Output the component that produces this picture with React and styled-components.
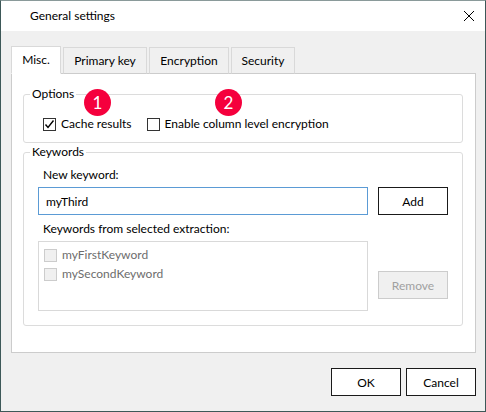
import React from "react";
import styled, { createGlobalStyle } from "styled-components";

const GlobalStyle = createGlobalStyle`
  html, body {
    margin: 0;
    padding: 0;
    background: #ffffff;
  }
  * {
    box-sizing: border-box;
  }
  body {
    font-family: "Segoe UI", Lato, "Noto Sans", sans-serif;
    font-size: 12px;
    color: #000000;
  }
`;

const Window = styled.div`
  width: 486px;
  height: 412px;
  display: flex;
  flex-direction: column;
  border: 1px solid #3d5858;
  border-top-color: #8a9a9a;
  background: #f0f0f0;
`;

const TitleBar = styled.div`
  height: 30px;
  flex-shrink: 0;
  display: flex;
  align-items: center;
  justify-content: space-between;
  background: #ffffff;
  padding: 0 8px 0 29px;
`;

const Title = styled.span`
  font-size: 12px;
  line-height: 16px;
`;

const CloseBtn = styled.button`
  width: 16px;
  height: 16px;
  display: flex;
  align-items: center;
  justify-content: center;
  border: none;
  padding: 0;
  background: transparent;
`;

const Body = styled.div`
  flex: 1;
  display: flex;
  flex-direction: column;
  padding: 15px 9px 0 10px;
`;

const TabStrip = styled.div`
  display: flex;
  align-items: flex-end;
  gap: 2px;
  height: 28px;
  margin-bottom: -1px;
  position: relative;
  z-index: 1;
`;

const Tab = styled.div`
  width: ${(p) => p.$w}px;
  height: ${(p) => (p.$active ? 28 : 27)}px;
  display: flex;
  align-items: center;
  justify-content: center;
  padding-bottom: ${(p) => (p.$active ? 1 : 0)}px;
  border: 1px solid #d9d9d9;
  border-bottom-color: ${(p) => (p.$active ? "#ffffff" : "#cccccc")};
  background: ${(p) => (p.$active ? "#ffffff" : "#f0f0f0")};
`;

const Panel = styled.div`
  height: 280px;
  background: #ffffff;
  border: 1px solid #cccccc;
  padding: 12px 12px 0 11px;
  display: flex;
  flex-direction: column;
  gap: 1px;
`;

const Group = styled.fieldset`
  position: relative;
  margin: 0;
  padding: 0;
  border: 1px solid #dcdcdc;
  border-radius: 3px;
  min-width: 0;
`;

const Legend = styled.legend`
  margin-left: 6px;
  padding: 0 2px;
  line-height: 16px;
`;

const OptionsRow = styled.div`
  display: flex;
  align-items: center;
  gap: 15px;
  padding: 14px 0 10px 19px;
`;

const CheckLabel = styled.label`
  display: flex;
  align-items: center;
  gap: 5px;
  line-height: 16px;
  color: ${(p) => (p.$disabled ? "#6d6d6d" : "#000000")};
`;

const Box = styled.span`
  width: 13px;
  height: 13px;
  display: flex;
  align-items: center;
  justify-content: center;
  border: 1px solid ${(p) => (p.$disabled ? "#cccccc" : "#333333")};
  background: ${(p) => (p.$disabled ? "#f0f0f0" : "#ffffff")};
`;

const Badge = styled.span`
  position: absolute;
  top: ${(p) => p.$top}px;
  left: ${(p) => p.$left}px;
  width: 27px;
  height: 27px;
  border-radius: 50%;
  background: #f5003d;
  color: #ffffff;
  font-size: 17px;
  display: flex;
  align-items: center;
  justify-content: center;
`;

const KeywordsGrid = styled.div`
  display: grid;
  grid-template-columns: 330px 70px;
  column-gap: 10px;
  padding: 7px 14px 14px 14px;
`;

const FieldLabel = styled.div`
  grid-column: 1 / 3;
  line-height: 16px;
  padding-left: 5px;
  margin-bottom: 4px;
  margin-top: ${(p) => p.$top || 0}px;
`;

const TextInput = styled.input`
  height: 28px;
  border: 1px solid #5b9bd5;
  padding: 0 7px;
  font: inherit;
  font-size: 12px;
  color: #000000;
  outline: none;
`;

const Button = styled.button`
  width: 70px;
  height: 28px;
  font: inherit;
  font-size: 12px;
  border: 1px solid ${(p) => (p.disabled ? "#cccccc" : "#1a1a1a")};
  background: ${(p) => (p.disabled ? "#f0f0f0" : "#ffffff")};
  color: ${(p) => (p.disabled ? "#a0a0a0" : "#000000")};
  align-self: start;
  margin-top: ${(p) => p.$top || 0}px;
  padding: 0;
`;

const ListBox = styled.div`
  height: 70px;
  border: 1px solid #d9d9d9;
  padding: 5px 0 0 5px;
  display: flex;
  flex-direction: column;
  gap: 3px;
`;

const Footer = styled.div`
  display: flex;
  justify-content: flex-end;
  gap: 5px;
  margin-top: 15px;
`;

function CheckMark() {
  return (
    <svg width="11" height="11" viewBox="0 0 11 11">
      <path d="M1.5 5.5 L4 8.5 L9.5 1.5" fill="none" stroke="#000" strokeWidth="1.4" />
    </svg>
  );
}

function CheckBox({ checked, disabled, children }) {
  return (
    <CheckLabel $disabled={disabled}>
      <Box $disabled={disabled}>{checked && <CheckMark />}</Box>
      {children}
    </CheckLabel>
  );
}

const tabs = [
  { name: "Misc.", w: 50 },
  { name: "Primary key", w: 84 },
  { name: "Encryption", w: 80 },
  { name: "Security", w: 64 },
];

export default function App() {
  return (
    <>
      <GlobalStyle />
      <Window>
        <TitleBar>
          <Title>General settings</Title>
          <CloseBtn>
            <svg width="12" height="12" viewBox="0 0 12 12">
              <path d="M1 1 L11 11 M11 1 L1 11" stroke="#000" strokeWidth="1" />
            </svg>
          </CloseBtn>
        </TitleBar>

        <Body>
          <TabStrip>
            {tabs.map((t, i) => (
              <Tab key={t.name} $w={t.w} $active={i === 0}>
                {t.name}
              </Tab>
            ))}
          </TabStrip>

          <Panel>
            <Group>
              <Legend>Options</Legend>
              <OptionsRow>
                <CheckBox checked>Cache results</CheckBox>
                <CheckBox>Enable column level encryption</CheckBox>
              </OptionsRow>
              <Badge $left={60} $top={-13}>1</Badge>
              <Badge $left={191} $top={-13}>2</Badge>
            </Group>

            <Group>
              <Legend>Keywords</Legend>
              <KeywordsGrid>
                <FieldLabel>New keyword:</FieldLabel>
                <TextInput defaultValue="myThird" />
                <Button>Add</Button>
                <FieldLabel $top={6}>Keywords from selected extraction:</FieldLabel>
                <ListBox>
                  <CheckBox disabled>myFirstKeyword</CheckBox>
                  <CheckBox disabled>mySecondKeyword</CheckBox>
                </ListBox>
                <Button disabled $top={30}>Remove</Button>
              </KeywordsGrid>
            </Group>
          </Panel>

          <Footer>
            <Button>OK</Button>
            <Button>Cancel</Button>
          </Footer>
        </Body>
      </Window>
    </>
  );
}
